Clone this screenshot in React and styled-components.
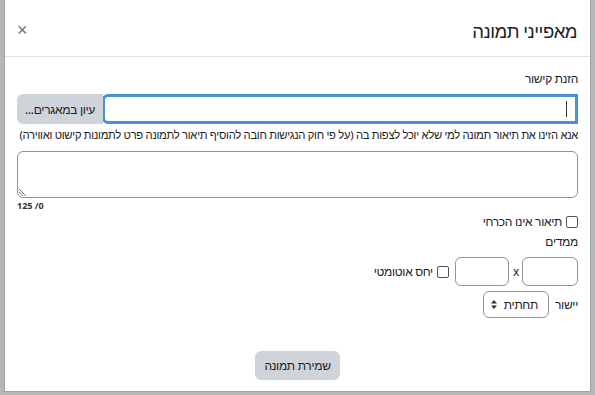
import React from 'react';
import styled, { createGlobalStyle } from 'styled-components';

const GlobalStyle = createGlobalStyle`
  html, body {
    margin: 0;
    padding: 0;
    background: #b4b6b8;
  }
  body {
    font-family: "Noto Sans", "Liberation Sans", sans-serif;
    color: #1d2125;
  }
`;

const Page = styled.div`
  width: 595px;
  height: 395px;
  padding: 0 4px 3px 4px;
  box-sizing: border-box;
`;

const Modal = styled.div`
  direction: rtl;
  background: #fff;
  height: 392px;
  border: 1px solid #9fa2a5;
  border-top: none;
  box-sizing: border-box;
  display: flex;
  flex-direction: column;
  overflow: hidden;
`;

const Header = styled.div`
  flex-shrink: 0;
  height: 57px;
  box-sizing: border-box;
  border-bottom: 1px solid #dee2e6;
  display: flex;
  align-items: center;
  justify-content: space-between;
  padding: 4px 13px 0 12px;
`;

const Title = styled.h5`
  margin: 0;
  font-size: 18.5px;
  letter-spacing: -0.5px;
  font-weight: 400;
`;

const Close = styled.button`
  border: none;
  background: none;
  padding: 0;
  color: #6a737b;
  font-size: 18px;
  line-height: 1;
  cursor: pointer;
  font-family: "Liberation Sans", Arial, sans-serif;
`;

const Body = styled.div`
  flex: 1;
  padding: 13px 12px 0 12px;
  display: flex;
  flex-direction: column;
  font-size: 12px;
  letter-spacing: -0.3px;
`;

const Label = styled.div`
  flex-shrink: 0;
  line-height: 18px;
  white-space: nowrap;
  margin-top: ${p => p.$mt || 0}px;
  font-size: ${p => p.$small ? '11.25px' : 'inherit'};
`;

const InputGroup = styled.div`
  flex-shrink: 0;
  display: flex;
  height: 30px;
  margin-top: 6px;
`;

const UrlInput = styled.div`
  flex: 1;
  border: 3px solid #4a8fd8;
  border-radius: 6px 0 0 6px;
  display: flex;
  align-items: center;
  padding-right: 8px;
`;

const Caret = styled.span`
  width: 1px;
  height: 16px;
  background: #333;
`;

const BrowseBtn = styled.div`
  width: 86px;
  background: #ced4da;
  border-radius: 6px 0 0 6px;
  display: flex;
  align-items: center;
  justify-content: center;
  margin-right: -1px;
`;

const Textarea = styled.div`
  flex-shrink: 0;
  height: 47px;
  border: 1px solid #8f959e;
  border-radius: 6px;
  margin-top: 7px;
  position: relative;
  box-sizing: border-box;
`;

const Grip = styled.svg`
  position: absolute;
  left: 1px;
  bottom: 1px;
`;

const Counter = styled.div`
  direction: ltr;
  text-align: left;
  font-size: 9px;
  font-weight: 700;
  letter-spacing: 0;
  color: #333;
  margin-top: 1px;
`;

const CheckRow = styled.label`
  display: flex;
  align-items: center;
  gap: 4px;
  margin-top: ${p => p.$mt || 0}px;
  margin-right: ${p => p.$mr || 0}px;
  line-height: 16px;
`;

const Box = styled.span`
  width: 10px;
  height: 10px;
  border: 1px solid #555;
  border-radius: 2px;
  display: inline-block;
`;

const Row = styled.div`
  flex-shrink: 0;
  display: flex;
  align-items: center;
  margin-top: ${p => p.$mt || 0}px;
`;

const SmallInput = styled.div`
  width: ${p => p.$w || 56}px;
  height: 29px;
  box-sizing: border-box;
  border: 1px solid #8f959e;
  border-radius: 6px;
`;

const Times = styled.span`
  margin: 0 3px 0 4px;
  font-size: 12px;
`;

const Select = styled.div`
  width: 66px;
  height: 27px;
  box-sizing: border-box;
  border: 1px solid #8f959e;
  border-radius: 6px;
  display: flex;
  align-items: center;
  justify-content: space-between;
  padding: 0 10px 0 7px;
  margin-right: 6px;
`;

const Footer = styled.div`
  flex-shrink: 0;
  display: flex;
  justify-content: center;
  margin-top: 33px;
`;

const SaveBtn = styled.div`
  width: 85px;
  height: 29px;
  border-radius: 6px;
  background: #ced4da;
  display: flex;
  align-items: center;
  justify-content: center;
`;

export default function App() {
  return (
    <Page>
      <GlobalStyle />
      <Modal>
        <Header>
          <Title>מאפייני תמונה</Title>
          <Close>×</Close>
        </Header>
        <Body>
          <Label>הזנת קישור</Label>
          <InputGroup>
            <UrlInput><Caret /></UrlInput>
            <BrowseBtn>עיון במאגרים...</BrowseBtn>
          </InputGroup>
          <Label $mt={2} $small>אנא הזינו את תיאור תמונה למי שלא יוכל לצפות בה (על פי חוק הנגישות חובה להוסיף תיאור לתמונה פרט לתמונות קישוט ואווירה)</Label>
          <Textarea>
            <Grip width="8" height="8" viewBox="0 0 8 8">
              <path d="M0 1 L7 8 M0 4 L4 8" stroke="#777" strokeWidth="1" />
            </Grip>
          </Textarea>
          <Counter>125 /0</Counter>
          <CheckRow $mt={2}><Box />תיאור אינו הכרחי</CheckRow>
          <Label $mt={3}>ממדים</Label>
          <Row $mt={6}>
            <SmallInput />
            <Times>x</Times>
            <SmallInput $w={54} />
            <CheckRow $mr={6}><Box />יחס אוטומטי</CheckRow>
          </Row>
          <Row $mt={5}>
            <Label>יישור</Label>
            <Select>
              <span>תחתית</span>
              <svg width="6" height="9" viewBox="0 0 6 9">
                <path d="M3 0 L6 3.5 H0 Z M3 9 L6 5.5 H0 Z" fill="#333" />
              </svg>
            </Select>
          </Row>
          <Footer>
            <SaveBtn>שמירת תמונה</SaveBtn>
          </Footer>
        </Body>
      </Modal>
    </Page>
  );
}
